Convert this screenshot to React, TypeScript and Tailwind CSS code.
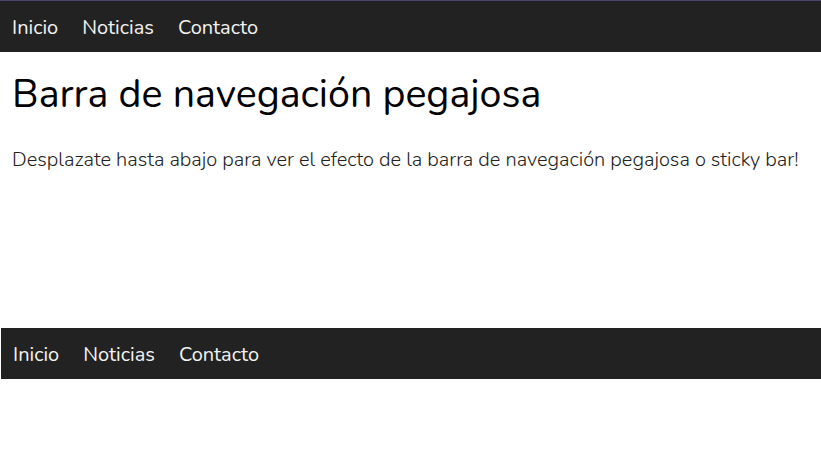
import React from "react";

const links = ["Inicio", "Noticias", "Contacto"];

function NavBar({ className = "" }: { className?: string }) {
    return (
        <nav className={`flex h-[51px] items-center bg-[#222222] pt-[2px] ${className}`}>
            {links.map((l) => (
                <a key={l} href="#" className="px-3 text-[20px] text-[#f2f2f2]">
                    {l}
                </a>
            ))}
        </nav>
    );
}

export default function App() {
    return (
        <div
            className="min-h-screen bg-white"
            style={{ fontFamily: "Nunito, Lato, 'Open Sans', sans-serif" }}
        >
            <div className="border-t border-[#48466a]">
                <NavBar />
            </div>

            <div className="px-3">
                <h1 className="mt-[18px] text-[39.4px] leading-[48px] text-black">
                    Barra de navegación pegajosa
                </h1>
                <p className="mt-[27px] text-[20px] font-light leading-[30px] text-[#222]">
                    Desplazate hasta abajo para ver el efecto de la barra de navegación pegajosa o sticky bar!
                </p>
            </div>

            <div className="h-[153px]" />

            <NavBar className="ml-px" />
        </div>
    );
}
